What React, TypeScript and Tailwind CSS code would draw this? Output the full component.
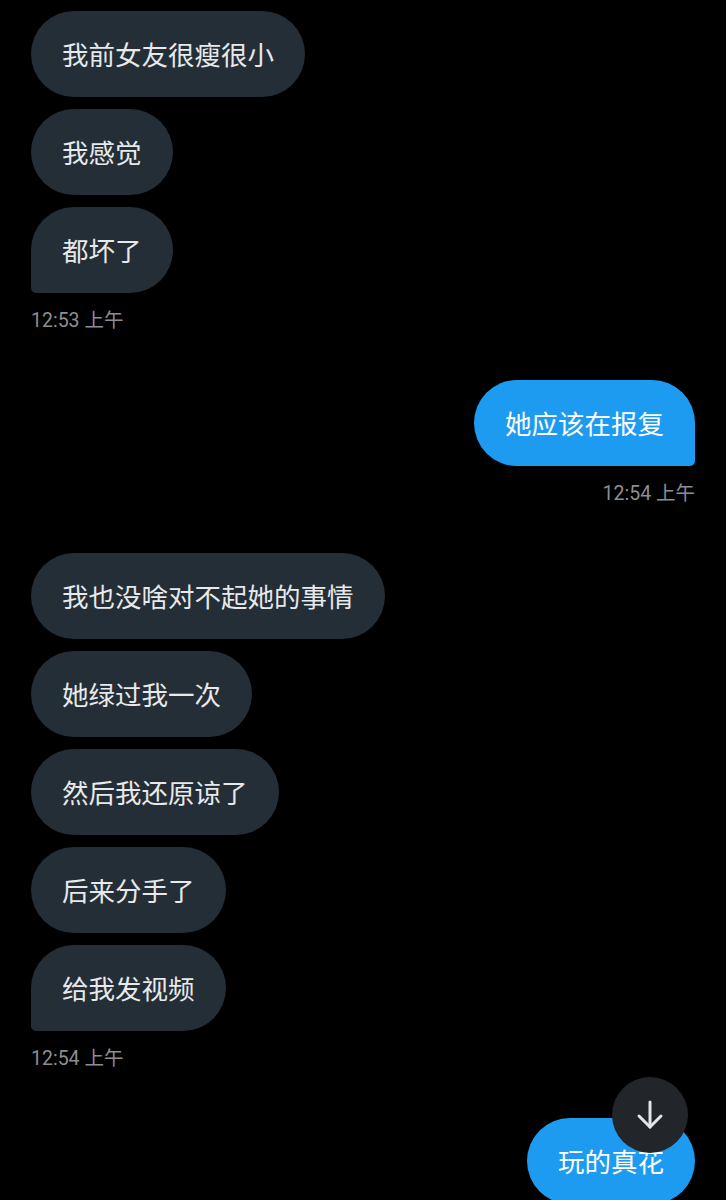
import React from "react";

const font = { fontFamily: '"Noto Sans CJK SC", "Noto Sans", sans-serif' };

function Left({ text, last }: { text: string; last?: boolean }) {
  return (
    <div
      className={`w-fit bg-[#242e37] text-[#e7e9ea] text-[26.5px] leading-[38px] px-[31px] py-[24px] rounded-[43px] ${last ? "rounded-bl-[5px]" : ""}`}
    >
      {text}
    </div>
  );
}

function Right({ text, last }: { text: string; last?: boolean }) {
  return (
    <div
      className={`w-fit self-end bg-[#1d9bf0] text-white text-[26.5px] leading-[38px] px-[31px] py-[24px] rounded-[43px] ${last ? "rounded-br-[5px]" : ""}`}
    >
      {text}
    </div>
  );
}

function Time({ t, right }: { t: string; right?: boolean }) {
  return (
    <div
      className={`mt-[4px] text-[19.5px] leading-[24px] text-[#8b8f94] ${right ? "self-end" : ""}`}
      style={{ fontFamily: 'Roboto, "Noto Sans CJK SC", sans-serif' }}
    >
      {t}
    </div>
  );
}

export default function App() {
  return (
    <div className="relative w-[726px] h-[1200px] bg-black overflow-hidden" style={font}>
      <div className="flex flex-col gap-[12px] px-[31px] pt-[11px]">
        <Left text="我前女友很瘦很小" />
        <Left text="我感觉" />
        <Left text="都坏了" last />
        <Time t="12:53 上午" />
        <div className="h-[23px]" />
        <Right text="她应该在报复" last />
        <Time t="12:54 上午" right />
        <div className="h-[23px]" />
        <Left text="我也没啥对不起她的事情" />
        <Left text="她绿过我一次" />
        <Left text="然后我还原谅了" />
        <Left text="后来分手了" />
        <Left text="给我发视频" last />
        <Time t="12:54 上午" />
        <div className="h-[23px]" />
        <Right text="玩的真花" />
      </div>
      <div className="absolute left-[612px] top-[1077px] w-[76px] h-[76px] rounded-full bg-[#222529] flex items-center justify-center">
        <svg width="36" height="36" viewBox="0 0 36 36" fill="none" stroke="#e3e5e7" strokeWidth="3" strokeLinecap="round" strokeLinejoin="round">
          <path d="M18 5v25" />
          <path d="M7 19l11 11 11-11" />
        </svg>
      </div>
    </div>
  );
}
